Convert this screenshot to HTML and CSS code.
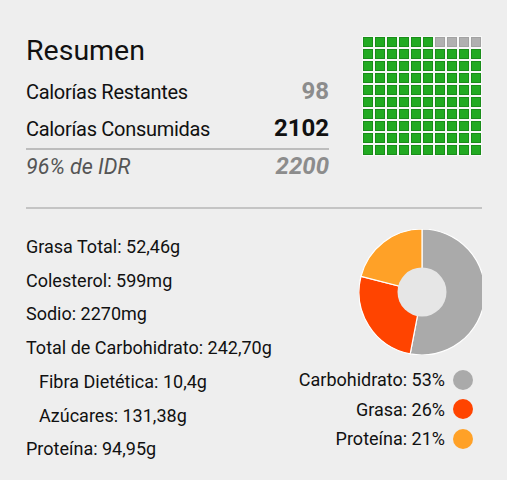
FILE: index.html
```html
<!DOCTYPE html>
<html lang="es">
<head>
    <meta charset="UTF-8">
    <meta name="viewport" content="width=device-width, initial-scale=1.0">
    <title>Resumen</title>
    <link rel="stylesheet" href="styles.css">
</head>
<body>

    <section class="resumen">
        <div class="totales">
            <h1>Resumen</h1>
            <div class="fila">
                <span>Calorías Restantes</span>
                <span class="valor restantes">98</span>
            </div>
            <div class="fila consumidas">
                <span>Calorías Consumidas</span>
                <span class="valor">2102</span>
            </div>
            <div class="fila idr">
                <span>96% de IDR</span>
                <span class="valor">2200</span>
            </div>
        </div>

        <div class="cuadricula">
            <i class="c"></i><i class="c"></i><i class="c"></i><i class="c"></i><i class="c"></i><i class="c"></i><i class="c gris"></i><i class="c gris"></i><i class="c gris"></i><i class="c gris"></i>
            <i class="c"></i><i class="c"></i><i class="c"></i><i class="c"></i><i class="c"></i><i class="c"></i><i class="c"></i><i class="c"></i><i class="c"></i><i class="c"></i>
            <i class="c"></i><i class="c"></i><i class="c"></i><i class="c"></i><i class="c"></i><i class="c"></i><i class="c"></i><i class="c"></i><i class="c"></i><i class="c"></i>
            <i class="c"></i><i class="c"></i><i class="c"></i><i class="c"></i><i class="c"></i><i class="c"></i><i class="c"></i><i class="c"></i><i class="c"></i><i class="c"></i>
            <i class="c"></i><i class="c"></i><i class="c"></i><i class="c"></i><i class="c"></i><i class="c"></i><i class="c"></i><i class="c"></i><i class="c"></i><i class="c"></i>
            <i class="c"></i><i class="c"></i><i class="c"></i><i class="c"></i><i class="c"></i><i class="c"></i><i class="c"></i><i class="c"></i><i class="c"></i><i class="c"></i>
            <i class="c"></i><i class="c"></i><i class="c"></i><i class="c"></i><i class="c"></i><i class="c"></i><i class="c"></i><i class="c"></i><i class="c"></i><i class="c"></i>
            <i class="c"></i><i class="c"></i><i class="c"></i><i class="c"></i><i class="c"></i><i class="c"></i><i class="c"></i><i class="c"></i><i class="c"></i><i class="c"></i>
            <i class="c"></i><i class="c"></i><i class="c"></i><i class="c"></i><i class="c"></i><i class="c"></i><i class="c"></i><i class="c"></i><i class="c"></i><i class="c"></i>
            <i class="c"></i><i class="c"></i><i class="c"></i><i class="c"></i><i class="c"></i><i class="c"></i><i class="c"></i><i class="c"></i><i class="c"></i><i class="c"></i>
        </div>
    </section>

    <hr class="separador">

    <section class="nutrientes">
        <ul class="lista">
            <li>Grasa Total: 52,46g</li>
            <li>Colesterol: 599mg</li>
            <li>Sodio: 2270mg</li>
            <li>Total de Carbohidrato: 242,70g</li>
            <li class="sub">Fibra Dietética: 10,4g</li>
            <li class="sub">Azúcares: 131,38g</li>
            <li>Proteína: 94,95g</li>
        </ul>

        <div class="grafico">
            <div class="pastel">
                <svg width="126" height="126" viewBox="0 0 126 126">
                    <path d="M63 63 L63 0 A63 63 0 1 1 51.2 124.9 Z" fill="#aaaaaa" stroke="#fff" stroke-width="1.2"/>
                    <path d="M63 63 L51.2 124.9 A63 63 0 0 1 2 47.3 Z" fill="#ff4400" stroke="#fff" stroke-width="1.2"/>
                    <path d="M63 63 L2 47.3 A63 63 0 0 1 63 0 Z" fill="#ffa127" stroke="#fff" stroke-width="1.2"/>
                    <circle cx="63" cy="63" r="24.5" fill="#e6e6e6"/>
                </svg>
            </div>
            <ul class="leyenda">
                <li>Carbohidrato: 53% <span class="punto carbo"></span></li>
                <li>Grasa: 26% <span class="punto grasa"></span></li>
                <li>Proteína: 21% <span class="punto proteina"></span></li>
            </ul>
        </div>
    </section>

</body>
</html>
```

FILE: styles.css
```css
body {
    font-family: Roboto, "Noto Sans", sans-serif;
    background-color: #eeeeee;
    color: #111;
    margin: 0;
    padding: 0 25px 0 26px;
}

.resumen {
    display: flex;
    justify-content: space-between;
    padding-top: 35px;
}

.totales {
    width: 303px;
}

h1 {
    font-size: 28.5px;
    font-weight: normal;
    line-height: 32px;
    margin: 0 0 6px 0;
}

.fila {
    display: flex;
    justify-content: space-between;
    align-items: baseline;
    font-size: 20px;
    letter-spacing: -0.3px;
    line-height: 36px;
}

.fila .valor {
    font-size: 24px;
    font-weight: bold;
    letter-spacing: 0;
}

.restantes {
    color: #8c8c8c;
}

.consumidas {
    border-bottom: 2px solid #bdbdbd;
    padding-bottom: 1px;
}

.idr {
    font-style: italic;
    font-size: 21.5px;
    letter-spacing: 0;
    color: #555;
    line-height: 32px;
}

.idr .valor {
    color: #8c8c8c;
}

.cuadricula {
    display: grid;
    grid-template-columns: repeat(10, 10px);
    grid-auto-rows: 10px;
    gap: 2px;
    padding: 1px;
    background-color: #f8f8f8;
    align-self: flex-start;
    margin-top: 1px;
}

.c {
    background-color: #22aa22;
    border: 1px solid #1a8d1a;
    box-sizing: border-box;
}

.c.gris {
    background-color: #b0b0b0;
    border-color: #a2a2a2;
}

.separador {
    border: none;
    border-top: 2px solid #c4c4c4;
    margin: 24px 0 0 0;
}

.nutrientes {
    display: flex;
    justify-content: space-between;
}

.lista {
    list-style: none;
    margin: 0;
    padding: 21px 0 0 0;
    font-size: 18px;
}

.lista li {
    line-height: 33.7px;
}

.lista .sub {
    padding-left: 13px;
}

.grafico {
    display: flex;
    flex-direction: column;
    align-items: flex-end;
    padding-top: 20px;
}

.pastel {
    width: 123px;
    height: 126px;
    overflow: hidden;
}

.leyenda {
    list-style: none;
    margin: 10px 9px 0 0;
    padding: 0;
    font-size: 18px;
    text-align: right;
}

.leyenda li {
    display: flex;
    align-items: center;
    justify-content: flex-end;
    gap: 8px;
    height: 29.5px;
}

.punto {
    width: 20px;
    height: 20px;
    border-radius: 50%;
}

.carbo {
    background-color: #aaaaaa;
}

.grasa {
    background-color: #ff4400;
}

.proteina {
    background-color: #ffa127;
}
```
